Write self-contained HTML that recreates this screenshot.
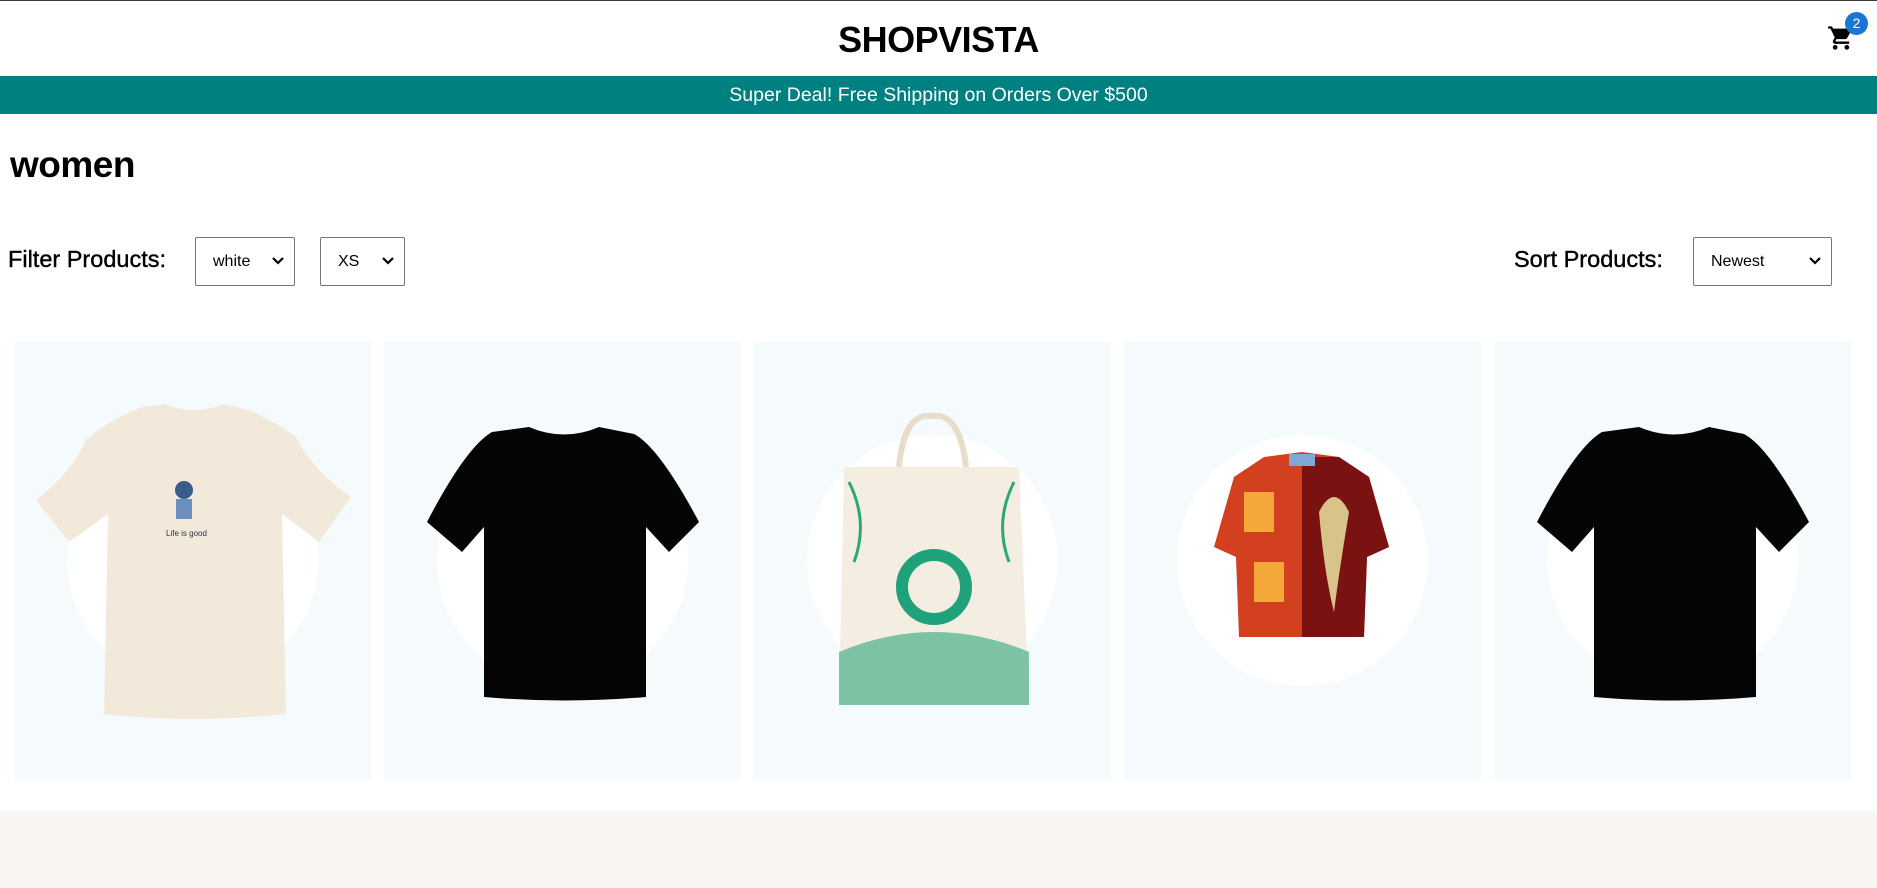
<!DOCTYPE html>
<html><head><meta charset="utf-8"><style>
*{margin:0;padding:0;box-sizing:border-box}
body{width:1877px;height:888px;overflow:hidden;background:#fff;font-family:"Liberation Sans",sans-serif;color:#000;position:relative}
.top{position:absolute;top:0;left:0;width:1877px;height:1px;background:#3a3a3a}
.logo{position:absolute;top:18px;left:0;width:1877px;text-align:center;font-size:36px;font-weight:bold;line-height:44px;letter-spacing:-0.5px}
.cart{position:absolute;left:1827px;top:24px}
.badge{position:absolute;left:1845px;top:12px;width:23px;height:23px;border-radius:50%;background:#1976d2;color:#fff;font-size:14px;text-align:center;line-height:23px}
.bar{position:absolute;top:76px;left:0;width:1877px;height:38px;background:#008080;color:#fff;font-size:19.5px;text-align:center;line-height:38px}
h1{position:absolute;left:10px;top:142px;font-size:37px;font-weight:bold;line-height:46px;letter-spacing:-0.5px}
.lbl{position:absolute;top:244px;font-size:23.5px;line-height:30px;-webkit-text-stroke:0.4px #000}
.sel{position:absolute;top:237px;height:49px;border:1px solid #767676;border-radius:2px;background:#fff;font-size:16px;line-height:47px;padding-left:17px}
.sel svg{position:absolute;right:10px;top:19px}
.card{position:absolute;top:342px;width:357px;height:437px;background:#f5fbfd;overflow:hidden}
.circ{position:absolute;left:53px;top:93px;width:251px;height:251px;border-radius:50%;background:#fff}
.card svg.p{position:absolute;left:0;top:0}
.foot{position:absolute;left:0;top:811px;width:1877px;height:77px;background:#faf4f3}
</style></head><body>
<div class="top"></div>
<div class="logo">SHOPVISTA</div>
<svg class="cart" width="28" height="28" viewBox="0 0 24 24"><path d="M7 18c-1.1 0-2 .9-2 2s.9 2 2 2 2-.9 2-2-.9-2-2-2zM1 2v2h2l3.6 7.59-1.35 2.45c-.16.28-.25.61-.25.96 0 1.1.9 2 2 2h12v-2H7.420c-.14 0-.25-.11-.25-.25l.03-.12.9-1.63h7.45c.75 0 1.41-.41 1.75-1.030l3.58-6.49A1 1 0 0 0 20 4H5.21l-.94-2H1zm16 16c-1.1 0-2 .9-2 2s.9 2 2 2 2-.9 2-2-.9-2-2-2z" fill="#000"/></svg>
<div class="badge">2</div>
<div class="bar">Super Deal! Free Shipping on Orders Over $500</div>
<h1>women</h1>
<div class="lbl" style="left:8px">Filter Products:</div>
<div class="sel" style="left:195px;width:100px">white<svg width="12" height="8" viewBox="0 0 12 8"><path d="M1 1l5 5 5-5" stroke="#000" stroke-width="2.2" fill="none"/></svg></div>
<div class="sel" style="left:320px;width:85px">XS<svg width="12" height="8" viewBox="0 0 12 8"><path d="M1 1l5 5 5-5" stroke="#000" stroke-width="2.2" fill="none"/></svg></div>
<div class="lbl" style="left:1514px">Sort Products:</div>
<div class="sel" style="left:1693px;width:139px">Newest<svg width="12" height="8" viewBox="0 0 12 8"><path d="M1 1l5 5 5-5" stroke="#000" stroke-width="2.2" fill="none"/></svg></div>

<div class="card" style="left:14px"><div class="circ"></div>
<svg class="p" width="357" height="437"><path d="M125 66 L150 62 Q180 74 210 62 L235 68 Q262 80 282 95 Q300 130 337 155 L305 200 L268 172 L272 372 Q180 382 90 372 L94 172 L55 200 L22 158 Q58 130 72 98 Q95 78 125 66 Z" fill="#f2e9db"/><circle cx="170" cy="148" r="9" fill="#3a5b8c"/><rect x="162" y="157" width="16" height="20" fill="#6d8fbf"/><text x="152" y="194" font-size="8" fill="#234">Life is good</text></svg></div>

<div class="card" style="left:384px"><div class="circ"></div>
<svg class="p" width="357" height="437"><path d="M108 90 L145 85 Q180 100 215 85 L250 92 Q275 105 315 180 L285 210 L262 185 L262 355 Q180 362 100 355 L100 185 L78 210 L43 180 Q82 105 108 90 Z" fill="#050505"/></svg></div>

<div class="card" style="left:754px"><div class="circ"></div>
<svg class="p" width="357" height="437"><path d="M145 125 Q150 70 178 74 Q206 70 212 125" stroke="#e8dccb" stroke-width="6" fill="none"/><path d="M90 125 L265 125 L275 363 L85 363 Z" fill="#f3ede2"/><path d="M85 310 Q180 270 275 310 L275 363 L85 363 Z" fill="#2fa57a" opacity=".6"/><circle cx="180" cy="245" r="32" fill="none" stroke="#1fa27a" stroke-width="12"/><path d="M95 140 Q115 180 100 220 M260 140 Q240 180 255 220" stroke="#2fa57a" stroke-width="3" fill="none"/></svg></div>

<div class="card" style="left:1124px"><div class="circ"></div>
<svg class="p" width="357" height="437"><path d="M140 115 L178 110 L215 115 L245 135 L265 205 L243 215 L240 295 L115 295 L112 215 L90 205 L110 135 Z" fill="#d2401f"/><path d="M178 115 L215 115 L245 135 L265 205 L243 215 L240 295 L178 295 Z" fill="#7a1212"/><path d="M120 150 L150 150 L150 190 L120 190 Z M130 220 L160 220 L160 260 L130 260 Z" fill="#f5a83a"/><path d="M195 170 Q210 140 225 170 Q215 230 210 270 Q200 230 195 170Z" fill="#d8c48a"/><rect x="165" y="112" width="26" height="12" fill="#7fa7d8"/></svg></div>

<div class="card" style="left:1494px"><div class="circ"></div>
<svg class="p" width="357" height="437"><path d="M108 90 L145 85 Q180 100 215 85 L250 92 Q275 105 315 180 L285 210 L262 185 L262 355 Q180 362 100 355 L100 185 L78 210 L43 180 Q82 105 108 90 Z" fill="#050505"/></svg></div>

<div class="foot"></div>
</body></html>
